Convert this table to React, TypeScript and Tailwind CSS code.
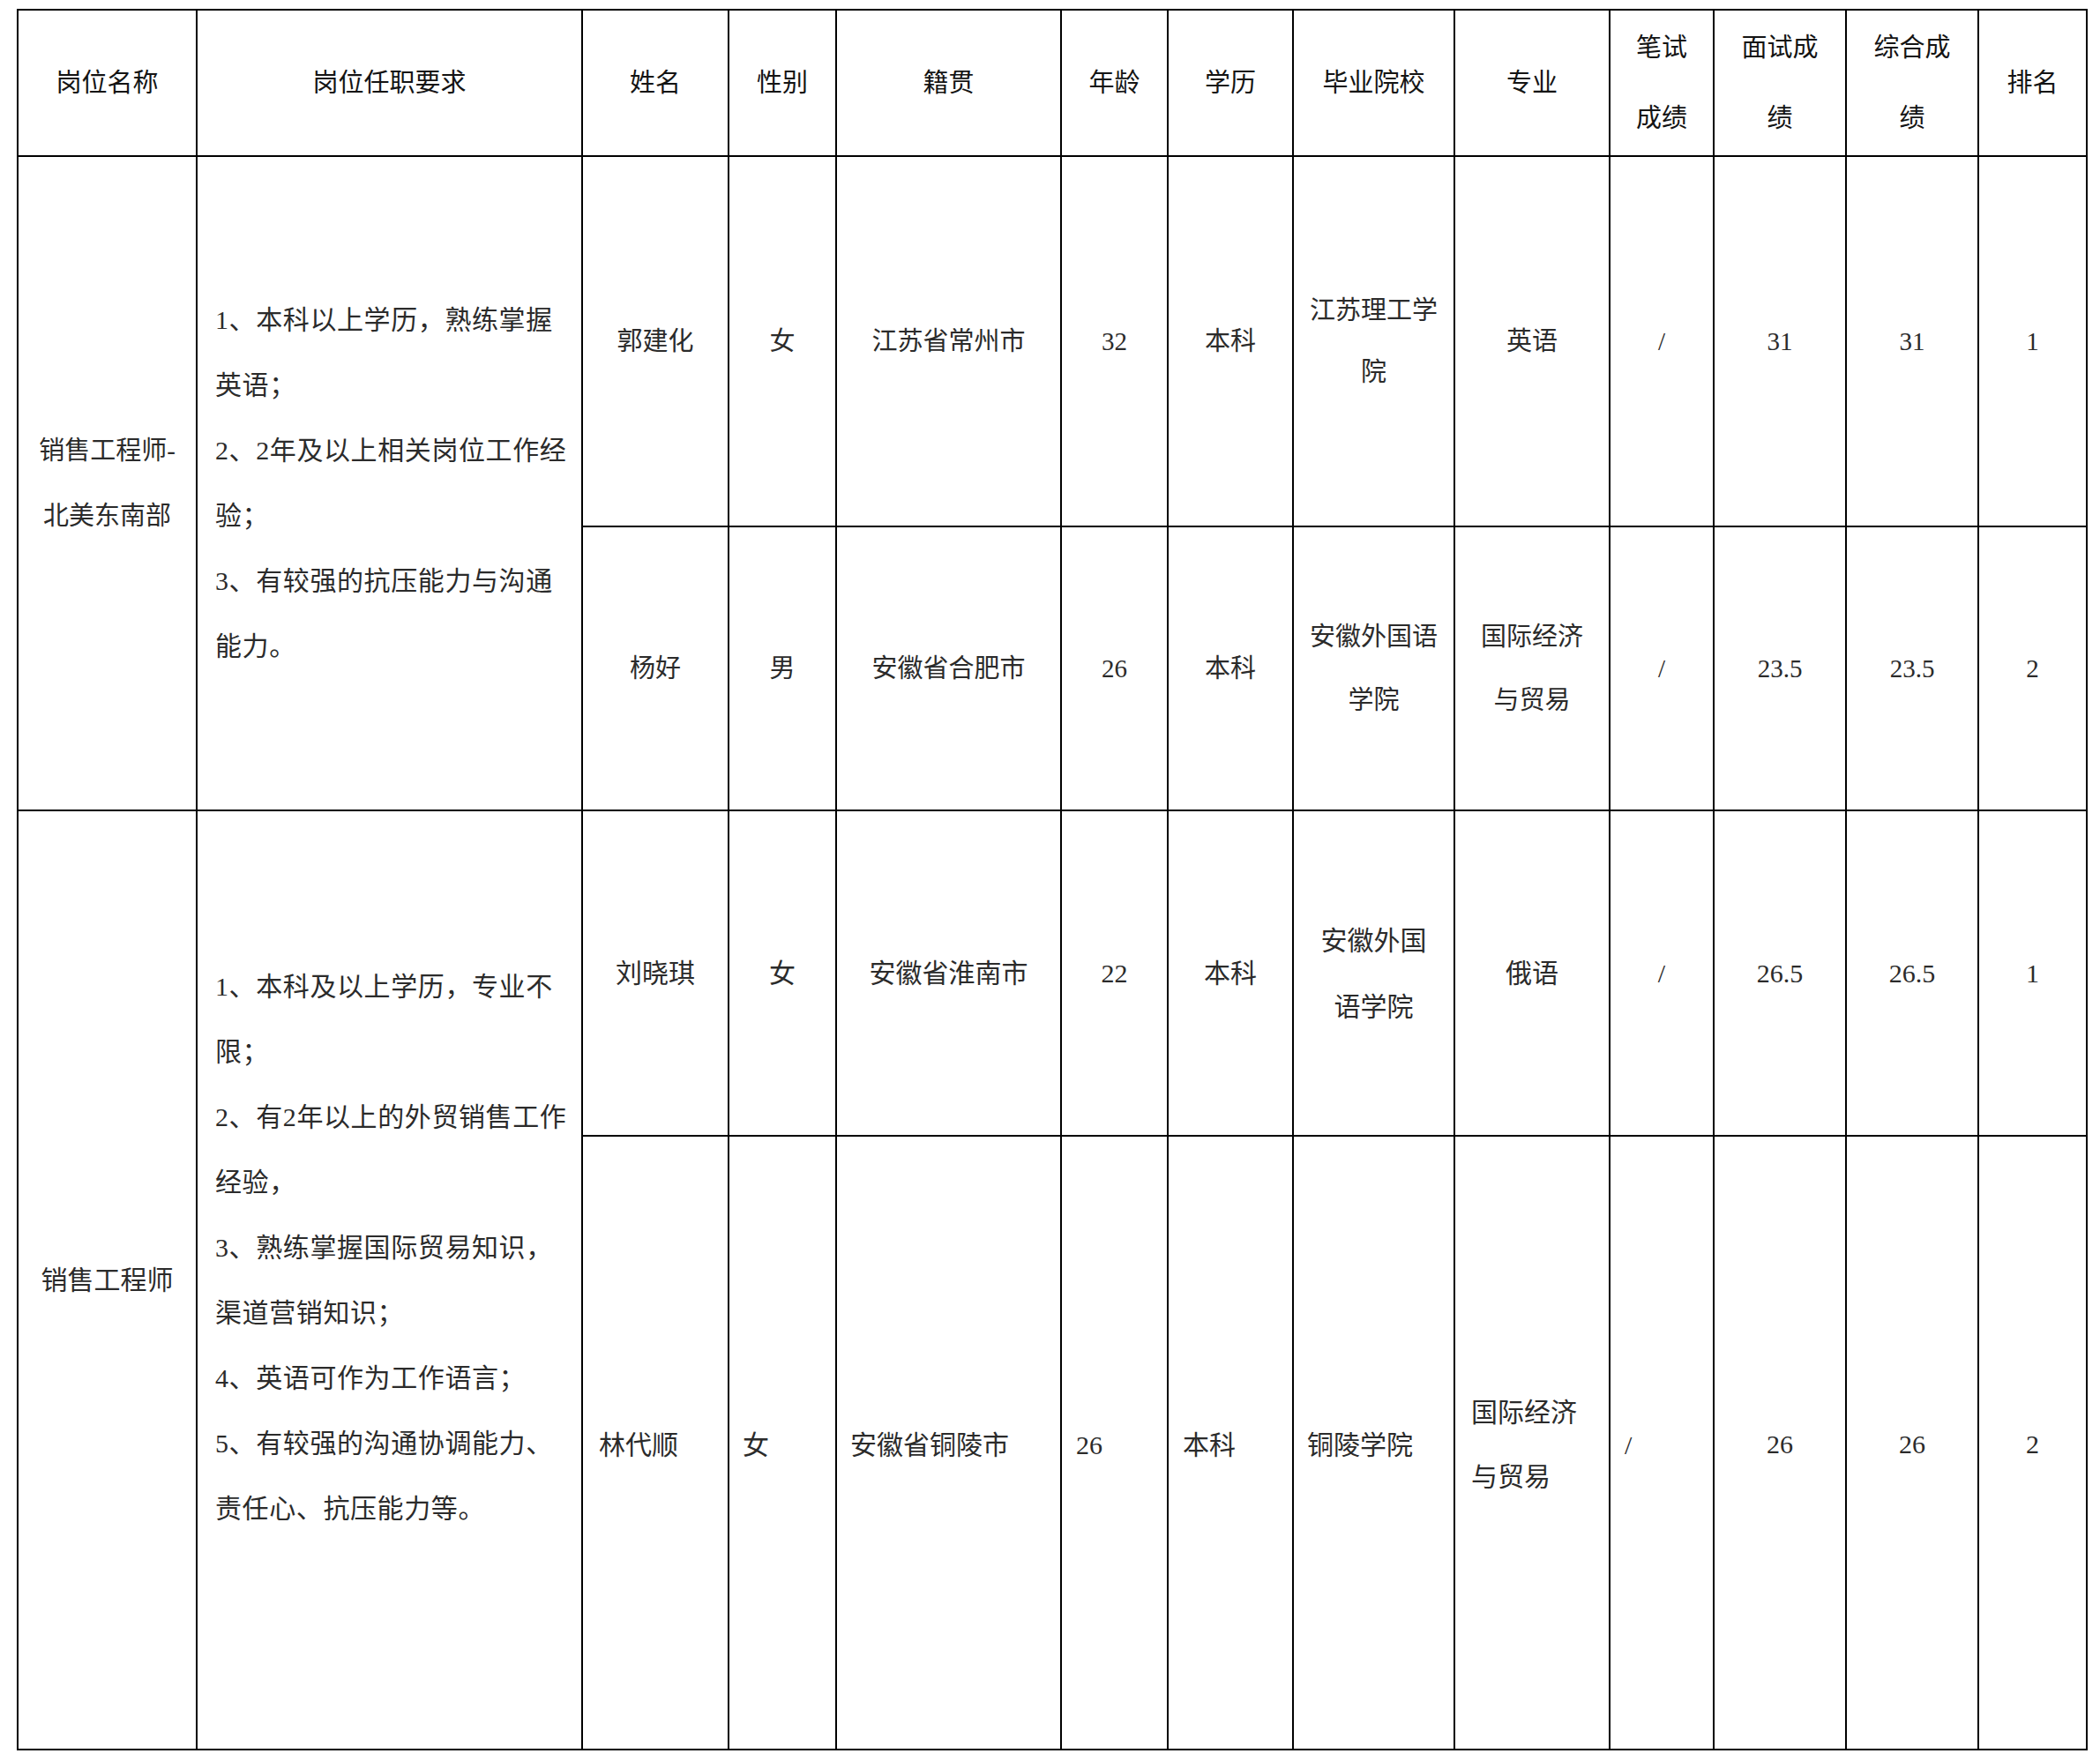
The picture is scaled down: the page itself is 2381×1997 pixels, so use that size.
import React from "react";

const FONT = { fontFamily: '"Liberation Serif", "Noto Sans CJK SC", serif' };

type CellProps = {
  lines: string[];
  cls?: string;
  lead?: string;
};

function C({ lines, cls = "", lead = "leading-[70px]" }: CellProps) {
  return (
    <div className={`bg-white flex items-center justify-center text-center ${cls}`}>
      <div className={lead}>
        {lines.map((l, i) => (
          <div key={i} className="whitespace-nowrap">
            {l === "" ? "\u00a0" : l}
          </div>
        ))}
      </div>
    </div>
  );
}

function L({ lines, cls = "", lead = "leading-[73px]" }: CellProps) {
  return (
    <div className={`bg-white flex items-center justify-start text-left pt-[4px] ${cls}`}>
      <div className={lead}>
        {lines.map((l, i) => (
          <div key={i} className="whitespace-nowrap">
            {l}
          </div>
        ))}
      </div>
    </div>
  );
}

function Req({ lines }: { lines: string[] }) {
  return (
    <div className="row-span-2 bg-white flex items-center justify-start pl-[20px] text-[30px] tracking-[0.6px] text-[#2b2b2b]">
      <div className="leading-[74px]">
        {lines.map((l, i) => (
          <div key={i} className="whitespace-nowrap">
            {l === "" ? "\u00a0" : l}
          </div>
        ))}
      </div>
    </div>
  );
}

const H = "text-[29px] text-[#141414]";
const B1 = "text-[29px] text-[#2b2b2b]";
const B2 = "text-[30px] text-[#2b2b2b]";

export default function App() {
  return (
    <div className="w-[2381px] h-[1997px] bg-white pl-[19px] pt-[10px]" style={FONT}>
      <div className="grid w-max gap-[2px] bg-black p-[2px] grid-cols-[201px_435px_164px_120px_253px_119px_140px_181px_174px_116px_148px_148px_121px] grid-rows-[164px_418px_320px_367px_694px]">
        {/* header */}
        <C cls={H} lines={["岗位名称"]} />
        <C cls={H} lines={["岗位任职要求"]} />
        <C cls={H} lines={["姓名"]} />
        <C cls={H} lines={["性别"]} />
        <C cls={H} lines={["籍贯"]} />
        <C cls={H} lines={["年龄"]} />
        <C cls={H} lines={["学历"]} />
        <C cls={H} lines={["毕业院校"]} />
        <C cls={H} lines={["专业"]} />
        <C cls={H} lead="leading-[80px]" lines={["笔试", "成绩"]} />
        <C cls={H} lead="leading-[80px]" lines={["面试成", "绩"]} />
        <C cls={H} lead="leading-[80px]" lines={["综合成", "绩"]} />
        <C cls={H} lines={["排名"]} />

        {/* group 1 */}
        <C cls={`row-span-2 ${B1}`} lead="leading-[74px]" lines={["销售工程师-", "北美东南部"]} />
        <Req
          lines={[
            "1、本科以上学历，熟练掌握",
            "英语；",
            "2、2年及以上相关岗位工作经",
            "验；",
            "3、有较强的抗压能力与沟通",
            "能力。",
          ]}
        />
        <C cls={B1} lines={["郭建化"]} />
        <C cls={B1} lines={["女"]} />
        <C cls={B1} lines={["江苏省常州市"]} />
        <C cls={B1} lines={["32"]} />
        <C cls={B1} lines={["本科"]} />
        <C cls={B1} lines={["江苏理工学", "院"]} />
        <C cls={B1} lines={["英语"]} />
        <C cls={B1} lines={["/"]} />
        <C cls={B1} lines={["31"]} />
        <C cls={B1} lines={["31"]} />
        <C cls={B1} lines={["1"]} />

        <C cls={B1} lines={["杨好"]} />
        <C cls={B1} lines={["男"]} />
        <C cls={B1} lines={["安徽省合肥市"]} />
        <C cls={B1} lines={["26"]} />
        <C cls={B1} lines={["本科"]} />
        <C cls={B1} lead="leading-[72px]" lines={["安徽外国语", "学院"]} />
        <C cls={B1} lead="leading-[72px]" lines={["国际经济", "与贸易"]} />
        <C cls={B1} lines={["/"]} />
        <C cls={B1} lines={["23.5"]} />
        <C cls={B1} lines={["23.5"]} />
        <C cls={B1} lines={["2"]} />

        {/* group 2 */}
        <C cls={`row-span-2 ${B2}`} lines={["销售工程师"]} />
        <Req
          lines={[
            "1、本科及以上学历，专业不",
            "限；",
            "2、有2年以上的外贸销售工作",
            "经验，",
            "3、熟练掌握国际贸易知识，",
            "渠道营销知识；",
            "4、英语可作为工作语言；",
            "5、有较强的沟通协调能力、",
            "责任心、抗压能力等。",
            "",
          ]}
        />
        <C cls={B2} lines={["刘晓琪"]} />
        <C cls={B2} lines={["女"]} />
        <C cls={B2} lines={["安徽省淮南市"]} />
        <C cls={B2} lines={["22"]} />
        <C cls={B2} lines={["本科"]} />
        <C cls={B2} lead="leading-[75px]" lines={["安徽外国", "语学院"]} />
        <C cls={B2} lines={["俄语"]} />
        <C cls={B2} lines={["/"]} />
        <C cls={B2} lines={["26.5"]} />
        <C cls={B2} lines={["26.5"]} />
        <C cls={B2} lines={["1"]} />

        <L cls={`pl-[18px] ${B2}`} lines={["林代顺"]} />
        <L cls={`pl-[15px] ${B2}`} lines={["女"]} />
        <L cls={`pl-[15px] ${B2}`} lines={["安徽省铜陵市"]} />
        <L cls={`pl-[16px] ${B2}`} lines={["26"]} />
        <L cls={`pl-[16px] ${B2}`} lines={["本科"]} />
        <L cls={`pl-[15px] ${B2}`} lines={["铜陵学院"]} />
        <L cls={`pl-[18px] ${B2}`} lines={["国际经济", "与贸易"]} />
        <L cls={`pl-[16px] ${B2}`} lines={["/"]} />
        <C cls={`pt-[4px] ${B2}`} lines={["26"]} />
        <C cls={`pt-[4px] ${B2}`} lines={["26"]} />
        <C cls={`pt-[4px] ${B2}`} lines={["2"]} />
      </div>
    </div>
  );
}
